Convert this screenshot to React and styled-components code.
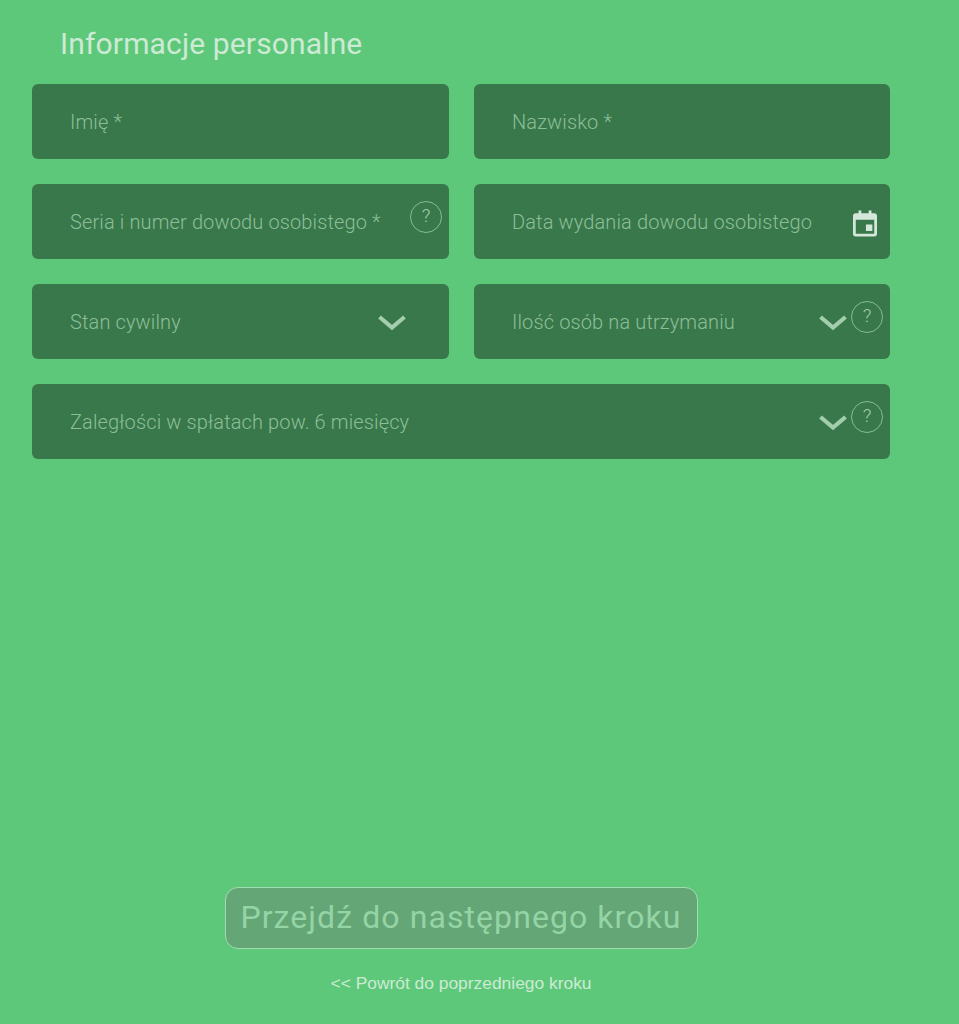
import styled, { createGlobalStyle } from 'styled-components';

const GlobalStyle = createGlobalStyle`
  html, body {
    margin: 0;
    padding: 0;
    background-color: #5dc879;
  }
`;

const Page = styled.div`
  width: 858px;
  height: 1024px;
  box-sizing: border-box;
  margin-left: 32px;
  padding-top: 26px;
  display: flex;
  flex-direction: column;
  font-family: Roboto, sans-serif;
  overflow: hidden;
`;

const Title = styled.h1`
  margin: 0 0 22px 28px;
  font-size: 30px;
  line-height: 36px;
  font-weight: 400;
  letter-spacing: 0.14px;
  color: #cdead5;
`;

const Form = styled.div`
  display: grid;
  grid-template-columns: 417px 416px;
  grid-auto-rows: 75px;
  gap: 25px;
`;

const Field = styled.div`
  position: relative;
  grid-column: ${(props) => (props.$wide ? '1 / -1' : 'auto')};
  display: flex;
  align-items: center;
  justify-content: space-between;
  padding: 0 ${(props) => props.$right || 38}px 0 38px;
  border-radius: 6px;
  background-color: #39784a;
`;

const Label = styled.span`
  font-size: 20px;
  font-weight: 300;
  letter-spacing: 0.13px;
  color: #8cbf99;
`;

const Help = styled.span`
  position: absolute;
  top: 17px;
  right: 7px;
  width: 30px;
  height: 27px;
  padding-bottom: 3px;
  border: 1px solid #86bb94;
  border-radius: 50%;
  display: flex;
  align-items: center;
  justify-content: center;
  font-size: 19px;
  font-weight: 300;
  color: #a4cdae;
`;

const Actions = styled.div`
  margin-top: 428px;
  display: flex;
  flex-direction: column;
  align-items: center;
`;

const NextButton = styled.button`
  width: 473px;
  height: 62px;
  padding: 0 0 3px;
  border: 1px solid #a3dcb2;
  border-radius: 13px;
  background-color: #65a677;
  font-family: Roboto, sans-serif;
  font-size: 32px;
  letter-spacing: 1.08px;
  color: #94d4a5;
`;

const BackLink = styled.a`
  margin-top: 23px;
  font-family: 'Liberation Sans', Arial, sans-serif;
  font-size: 17.4px;
  line-height: 22px;
  color: #cdead5;
`;

const CalendarSvg = styled.svg`
  margin-top: 4px;
`;

function Chevron() {
  return (
    <svg width="30" height="18" viewBox="0 0 30 18" fill="none">
      <path d="M2.5 4 L15 14.5 L27.5 4" stroke="#a4cdae" strokeWidth="4.2" />
    </svg>
  );
}

function CalendarIcon() {
  return (
    <CalendarSvg width="24" height="27" viewBox="0 0 26 28">
      <path
        fill="#d5e6da"
        fillRule="evenodd"
        d="M6 0h3v3h8V0h3v3h3a3 3 0 0 1 3 3v19a3 3 0 0 1-3 3H3a3 3 0 0 1-3-3V6a3 3 0 0 1 3-3h3zM3 10v15h20V10zM14 15h7v7h-7z"
      />
    </CalendarSvg>
  );
}

function App() {
  return (
    <Page>
      <GlobalStyle />
      <Title>Informacje personalne</Title>
      <Form>
        <Field>
          <Label>Imię *</Label>
        </Field>
        <Field>
          <Label>Nazwisko *</Label>
        </Field>
        <Field>
          <Label>Seria i numer dowodu osobistego *</Label>
          <Help>?</Help>
        </Field>
        <Field $right={13}>
          <Label>Data wydania dowodu osobistego</Label>
          <CalendarIcon />
        </Field>
        <Field $right={42}>
          <Label>Stan cywilny</Label>
          <Chevron />
        </Field>
        <Field $right={42}>
          <Label>Ilość osób na utrzymaniu</Label>
          <Chevron />
          <Help>?</Help>
        </Field>
        <Field $wide $right={42}>
          <Label>Zaległości w spłatach pow. 6 miesięcy</Label>
          <Chevron />
          <Help>?</Help>
        </Field>
      </Form>
      <Actions>
        <NextButton>Przejdź do następnego kroku</NextButton>
        <BackLink>&lt;&lt; Powrót do poprzedniego kroku</BackLink>
      </Actions>
    </Page>
  );
}

export default App;
